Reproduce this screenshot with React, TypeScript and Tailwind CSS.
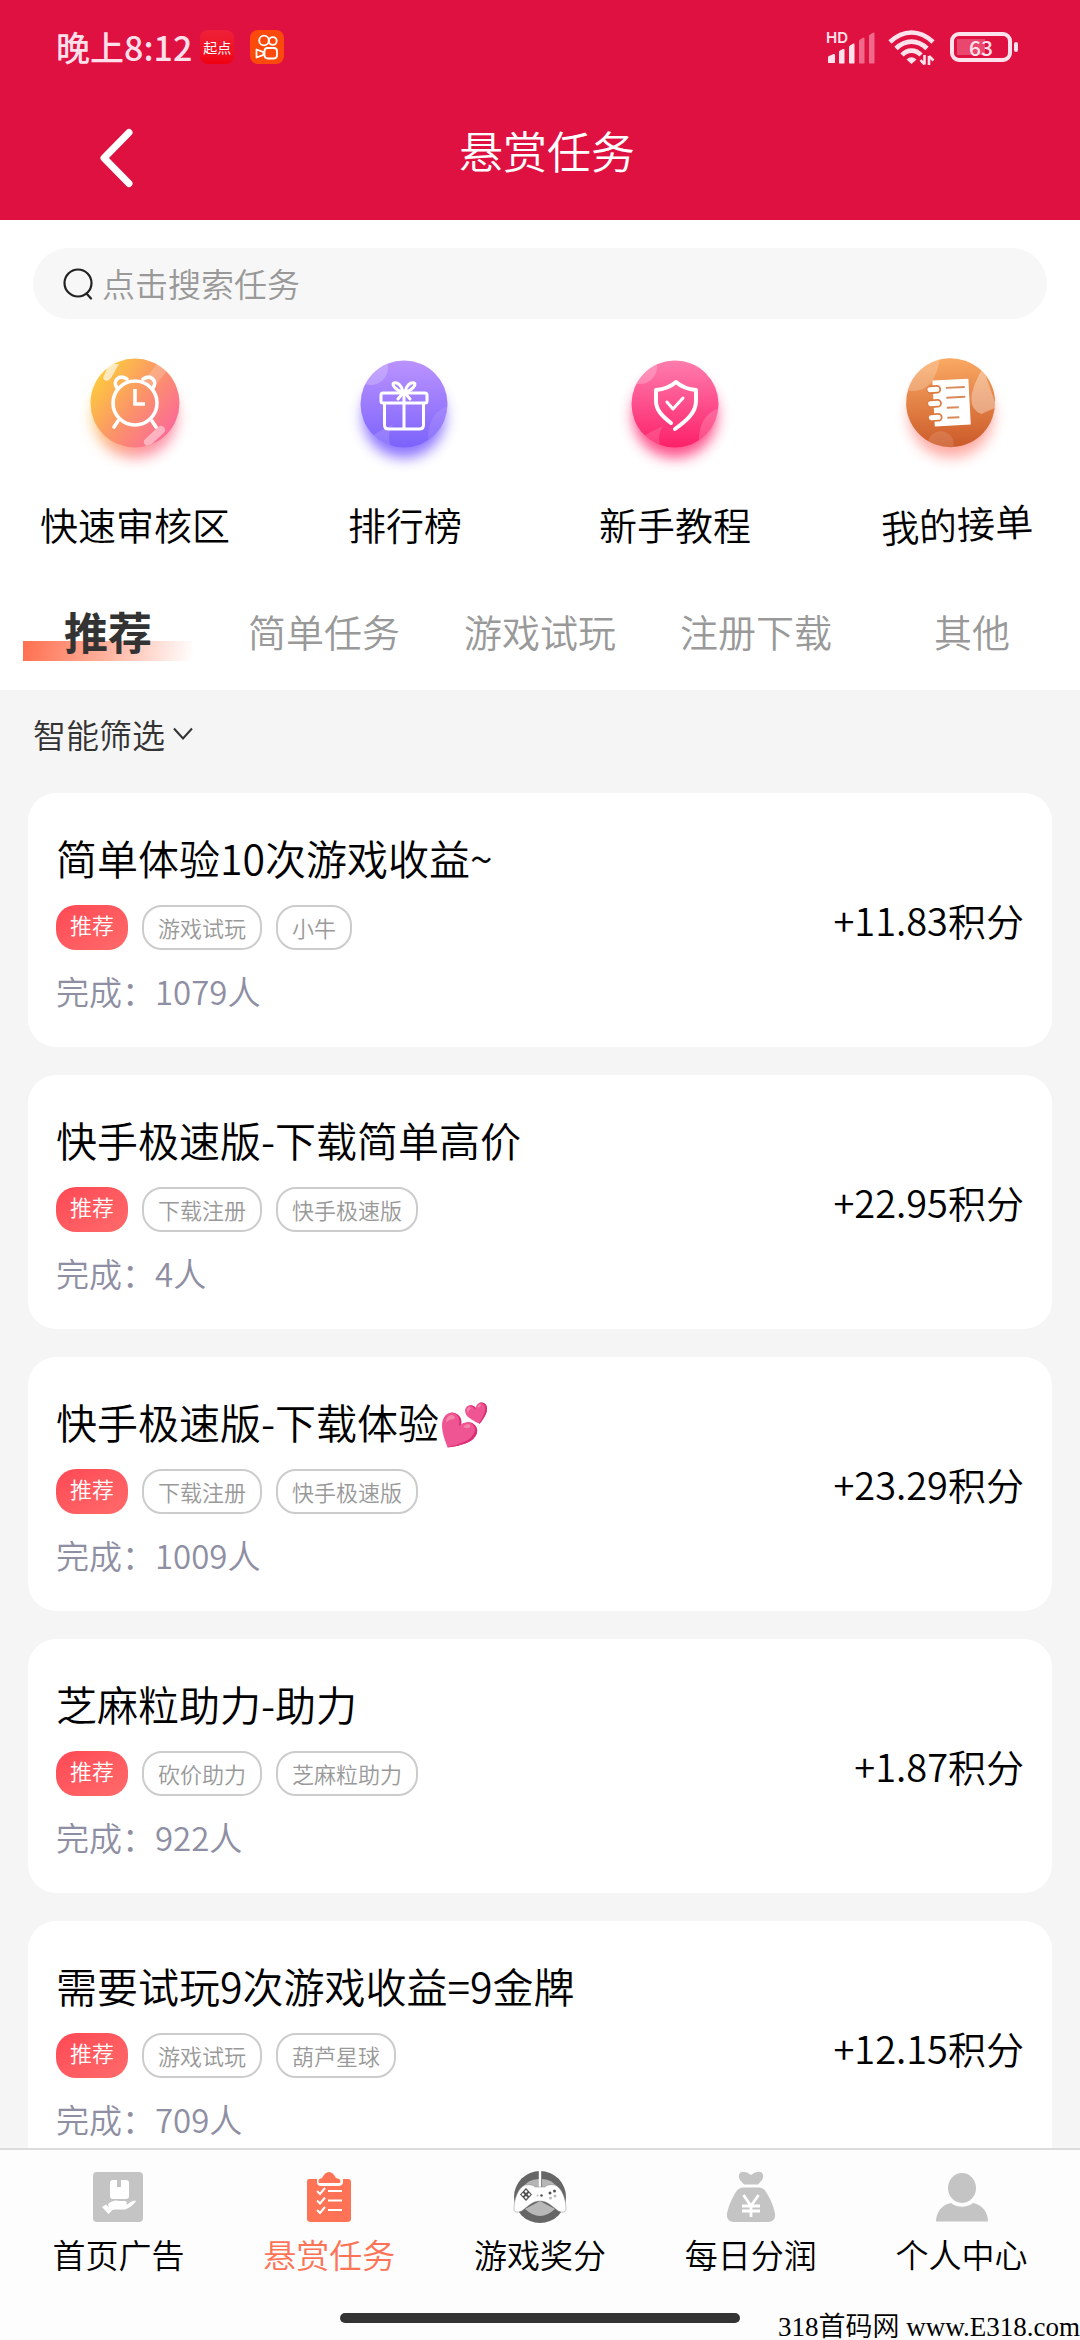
import type { ReactNode } from "react";

type Task = {
  title: string;
  tags: string[];
  done: number;
  points: string;
};

const tasks: Task[] = [
  { title: "简单体验10次游戏收益~", tags: ["游戏试玩", "小牛"], done: 1079, points: "+11.83积分" },
  { title: "快手极速版-下载简单高价", tags: ["下载注册", "快手极速版"], done: 4, points: "+22.95积分" },
  { title: "快手极速版-下载体验💕", tags: ["下载注册", "快手极速版"], done: 1009, points: "+23.29积分" },
  { title: "芝麻粒助力-助力", tags: ["砍价助力", "芝麻粒助力"], done: 922, points: "+1.87积分" },
  { title: "需要试玩9次游戏收益=9金牌", tags: ["游戏试玩", "葫芦星球"], done: 709, points: "+12.15积分" },
];

function KuaishouIcon() {
  return (
    <svg viewBox="0 0 34 34" className="size-[34px]" fill="none" stroke="#fff" strokeWidth="1.8" aria-hidden="true">
      <rect width="34" height="34" rx="8" fill="#fb4a0b" stroke="none" />
      <circle cx="14" cy="10.5" r="4.8" />
      <circle cx="22.8" cy="11" r="3.9" />
      <rect x="14.5" y="18" width="12.5" height="10.5" rx="3.2" />
      <path d="M6.5 19.5v8l7-2.6v-2.8z" strokeLinejoin="round" />
    </svg>
  );
}

function SignalIcon() {
  return (
    <span className="flex flex-col">
      <svg viewBox="0 0 50 34" className="h-[34px] w-[50px] overflow-visible" aria-hidden="true">
        <text x="0" y="13" fontSize="15" fontWeight="600" fill="#ffe3ec" fontFamily="Inter, sans-serif">HD</text>
        <g fill="#ffe3ec">
          <path d="M2 33v-5.5q0-1 1-1.4l4.500-2q1.500-.4 1.500 1v7.500q0 .4-.4.4H2.400q-.4 0-.4-.4z" />
          <path d="M13 33V22q0-1 1-1.400l3-1.500q1.500-.5 1.500 1V33q0 .4-.4.400h-4.700q-.4 0-.4-.4z" />
          <path d="M23 33V17q0-1 1-1.500l3-1.800q1.500-.7 1.500 1V33q0 .4-.4.400h-4.700q-.4 0-.4-.4z" />
        </g>
        <g fill="#f0688a">
          <path d="M33 33V11q0-1 1-1.500l3-1.800q1.500-.7 1.500 1V33q0 .4-.4.400h-4.700q-.4 0-.4-.4z" />
          <path d="M43 33V6q0-1 1-1.500l3-1.800q1.500-.7 1.500 1V33q0 .4-.4.400h-4.700q-.4 0-.4-.4z" />
        </g>
      </svg>
    </span>
  );
}

function WifiIcon() {
  return (
    <svg viewBox="0 0 48 36" className="h-9 w-12" fill="none" stroke="#ffe3ec" strokeWidth="4.6" aria-hidden="true">
      <path d="M2 13Q12 3.500 23.500 3.500T45 13" />
      <path d="M8 19.500Q15 12.600 23.500 12.600T39 19.500" />
      <path d="M14 26Q18 21.600 23.500 21.600T33 26" />
      <path d="M18.500 30.500q5-4.500 10 0L23.500 35z" fill="#ffe3ec" stroke="none" />
      <path d="M36.500 26v9.500M36.500 35.500l-4-4.500M41 36v-9M41 27l4.500 4.500" strokeWidth="2.6" />
    </svg>
  );
}

function Battery() {
  return (
    <div className="flex items-center gap-[2px]">
      <div className="flex h-[30px] w-[62px] items-center rounded-[9px] border-4 border-[#ffe3ec] bg-[linear-gradient(90deg,transparent_3px,#e9476e_3px,#e9476e_31px,transparent_31px)] bg-[length:100%_16px] bg-center bg-no-repeat">
        <span className="flex-1 text-center text-[21px] leading-[22px] font-medium text-[#ffe3ec]">63</span>
      </div>
      <div className="h-[10px] w-1 rounded-sm bg-[#ffe3ec]" />
    </div>
  );
}

function ClockBadge() {
  return (
    <svg viewBox="0 0 120 130" className="h-[130px] w-[120px]" fill="none" aria-hidden="true">
      <defs>
        <linearGradient id="clock" x1="0.1" y1="0.2" x2="0.9" y2="0.8">
          <stop offset="0" stopColor="#fdc840" />
          <stop offset="0.5" stopColor="#fb9468" />
          <stop offset="1" stopColor="#fc6c95" />
        </linearGradient>
        <filter id="clockBlur" x="-30%" y="-30%" width="160%" height="160%">
          <feGaussianBlur stdDeviation="7" />
        </filter>
        <clipPath id="clockClip"><circle cx="60" cy="55" r="44.5" /></clipPath>
      </defs>
      <circle cx="60" cy="68" r="42" fill="url(#clock)" opacity="0.8" filter="url(#clockBlur)" />
      <circle cx="60" cy="55" r="44.5" fill="url(#clock)" />
      <g clipPath="url(#clockClip)">
        <path d="M40 16l-6 0-6 14q3 6 8 0l8-14z" fill="#fff" fillOpacity="0.65" />
        <path d="M88 18L74 36" stroke="#fff" strokeOpacity="0.2" strokeWidth="12" />
        <path d="M86 82L73 94" stroke="#fff" strokeOpacity="0.45" strokeWidth="8" strokeLinecap="round" />
      </g>
      <g stroke="#fff" strokeWidth="3.6" strokeLinecap="round">
        <circle cx="60" cy="55" r="22" />
        <path d="M42 40c-5-7 2-14 10-9M78 40c5-7-2-14-10-9" />
        <path d="M43 73l-4 6M77 73l4 6" />
        <path d="M60 41v15h10" strokeLinecap="butt" />
      </g>
    </svg>
  );
}

function GiftBadge() {
  return (
    <svg viewBox="0 0 120 130" className="h-[130px] w-[120px]" fill="none" aria-hidden="true">
      <defs>
        <linearGradient id="gift" x1="0" y1="0" x2="0" y2="1">
          <stop offset="0" stopColor="#bb93ff" />
          <stop offset="1" stopColor="#7c63fb" />
        </linearGradient>
        <filter id="giftBlur" x="-30%" y="-30%" width="160%" height="160%">
          <feGaussianBlur stdDeviation="7" />
        </filter>
        <clipPath id="giftClip"><circle cx="59" cy="56" r="43.5" /></clipPath>
      </defs>
      <circle cx="59" cy="69" r="41" fill="#8266ff" opacity="0.9" filter="url(#giftBlur)" />
      <circle cx="59" cy="56" r="43.5" fill="url(#gift)" />
      <g clipPath="url(#giftClip)" fill="#fff" fillOpacity="0.2">
        <circle cx="26" cy="20" r="17" />
        <path d="M26 88l22-12q-8 12 0 28z" fillOpacity="0.14" />
        <path d="M104 58q-22 6-21 36l21 6z" fillOpacity="0.1" />
      </g>
      <g stroke="#fff" strokeWidth="3" strokeLinejoin="round" strokeLinecap="round">
        <rect x="36" y="45" width="46" height="10" rx="2" />
        <path d="M39.500 56v21q0 4 4 4h31q4 0 4-4V56M59 46v34" />
        <path d="M58 44c-7-1-12-8-9-9 4-1 8 3 9 9zM60 44c7-1 12-8 9-9-4-1-8 3-9 9zM58 45l-5 6M60 45l5 6" />
      </g>
    </svg>
  );
}

function ShieldBadge() {
  return (
    <svg viewBox="0 0 120 130" className="h-[130px] w-[120px]" fill="none" aria-hidden="true">
      <defs>
        <linearGradient id="shield" x1="0" y1="0" x2="0" y2="1">
          <stop offset="0" stopColor="#ff7cad" />
          <stop offset="1" stopColor="#fc2169" />
        </linearGradient>
        <filter id="shieldBlur" x="-30%" y="-30%" width="160%" height="160%">
          <feGaussianBlur stdDeviation="7" />
        </filter>
        <clipPath id="shieldClip"><circle cx="60" cy="56" r="43.5" /></clipPath>
      </defs>
      <circle cx="60" cy="68" r="42" fill="#ff3f7f" opacity="0.9" filter="url(#shieldBlur)" />
      <circle cx="60" cy="56" r="43.5" fill="url(#shield)" />
      <g clipPath="url(#shieldClip)" fill="#fff" fillOpacity="0.22">
        <circle cx="25" cy="19" r="17" />
        <path d="M28 88l20-10q-8 12 0 26z" fillOpacity="0.14" />
        <path d="M104 60q-22 8-20 38l20 4z" fillOpacity="0.18" />
      </g>
      <g stroke="#fff" strokeWidth="4" strokeLinejoin="round" strokeLinecap="round">
        <path d="M56 75C47 68 41 62 41 53V42q12-1 20-8 8 7 20 8v11c0 12-10 20-21 28" />
        <path d="M52 54l6 7 10-11" strokeWidth="3" />
      </g>
    </svg>
  );
}

function NotebookBadge() {
  return (
    <svg viewBox="0 0 120 130" className="h-[130px] w-[120px]" fill="none" aria-hidden="true">
      <defs>
        <linearGradient id="note" x1="0" y1="0" x2="0" y2="1">
          <stop offset="0" stopColor="#faa963" />
          <stop offset="1" stopColor="#cb5a29" />
        </linearGradient>
        <filter id="noteBlur" x="-30%" y="-30%" width="160%" height="160%">
          <feGaussianBlur stdDeviation="7" />
        </filter>
        <clipPath id="noteClip"><circle cx="60" cy="55" r="44.5" /></clipPath>
      </defs>
      <circle cx="60" cy="68" r="42" fill="#ff7d72" opacity="0.65" filter="url(#noteBlur)" />
      <circle cx="60" cy="55" r="44.5" fill="url(#note)" />
      <g clipPath="url(#noteClip)" fill="#fff" fillOpacity="0.22">
        <path d="M10 38q34 14 42-30L10 8z" />
        <path d="M94 22q-24 36-4 46l16-6z" fillOpacity="0.35" />
        <circle cx="48" cy="96" r="13" fillOpacity="0.12" />
      </g>
      <path d="M43 32h36v46H43z" fill="#fff" />
      <g stroke="#db7a3f" strokeWidth="8.5" strokeLinecap="round">
        <path d="M41 41h6M41 55h6M41 69h6" />
      </g>
      <g stroke="#fff" strokeWidth="5" strokeLinecap="round">
        <path d="M40 41h7M40 55h7M40 69h7" />
      </g>
      <g stroke="#d98a5a" strokeWidth="2">
        <path d="M56 40h19M56 50h19M56 60h12M56 70h12" />
      </g>
    </svg>
  );
}

function HomeAdIcon() {
  return (
    <svg viewBox="0 0 54 54" className="size-[54px]" aria-hidden="true">
      <rect x="2" y="2" width="50" height="50" rx="4" fill="#c4c4c4" />
      <path d="M22 10h4v7h4v-7h5q3 0 3 3v13q0 3-3 3H22q-3 0-3-3V13q0-3 3-3z" fill="#fff" />
      <path d="M17 34q6-5 11-3h6q3 1 1 3.500h-7 8q4-3 7-4 3 0 1 2-4 5-10 7H24q-3 0-5 2z" fill="#fff" />
      <path d="M11 37l4-2.500 6 6-3.500 3.500z" fill="#fff" />
    </svg>
  );
}

function TasksIcon() {
  return (
    <svg viewBox="0 0 54 54" className="size-[54px]" fill="none" aria-hidden="true">
      <path d="M7 9h8v3q0 4 4 4h17q5 0 5-4V9h5q3 0 3 3v37q0 3-4 3H9q-4 0-4-3V12q0-3 2-3z" fill="#fe7355" />
      <path d="M17 13q-2-4 3-5 3-6 7-6t7 6q6 1 4 5z" fill="#fe7355" />
      <g stroke="#fff" strokeWidth="2">
        <path d="M15 21l3 3 5-6M15 30.500l3 3 5-6M15 40l3 3 5-6M26 21h14M26 30.500h14M26 40h14" />
      </g>
    </svg>
  );
}

function GamepadIcon() {
  return (
    <svg viewBox="0 0 54 54" className="size-[54px]" aria-hidden="true">
      <circle cx="27" cy="27" r="26" fill="#666" />
      <path d="M9 19Q14 9 26 9v14zM45 19Q40 9 29 9v14z" fill="#b5b5b5" />
      <path d="M25.800 0h2.400v18h-2.400z" fill="#fdfdfd" />
      <path d="M12 39q15 14 30 0L27 31z" fill="#b8b8b8" />
      <path d="M12 15q8-1 10 2h10q2-3 10-2c7 3 11 14 11 24 0 4-5 4-9 1-5-4-10-9-17-9s-12 5-17 9c-4 3-9 3-9-1 0-10 4-21 11-24z" fill="#fff" stroke="#888" strokeWidth="0.5" />
      <path d="M13 18l6 6.500-6 6.500-6-6.500z" fill="#505050" />
      <g fill="#fff">
        <circle cx="13" cy="21.5" r="1.3" />
        <circle cx="13" cy="27.5" r="1.3" />
        <circle cx="10" cy="24.5" r="1.3" />
        <circle cx="16" cy="24.5" r="1.3" />
      </g>
      <g fill="#555">
        <circle cx="37" cy="23" r="1.5" />
        <circle cx="41.5" cy="21" r="1.5" />
        <circle cx="28.5" cy="25.5" r="1.3" />
      </g>
      <g fill="#bbb">
        <circle cx="24.5" cy="25.5" r="1" />
        <circle cx="37.5" cy="28" r="1.5" />
        <circle cx="42" cy="26" r="1.5" />
      </g>
    </svg>
  );
}

function MoneyBagIcon() {
  return (
    <svg viewBox="0 0 54 54" className="size-[54px]" aria-hidden="true">
      <path d="M17 2q5-1 10 3 5-4 10-3 4 3 1 8l-4 4.500H20L16 10q-3-5 1-8z" fill="#c4c4c4" />
      <path d="M19 17.500h16q5 0 8 6 6 10 8 20 1 8-7 8.500H10q-8-.5-7-8.500 2-10 8-20 3-6 8-6z" fill="#c4c4c4" />
      <path d="M19.500 25l7.500 11 7.500-11M18 36h18M18 41h18M27 36v11" fill="none" stroke="#fff" strokeWidth="2.8" />
    </svg>
  );
}

function ProfileIcon() {
  return (
    <svg viewBox="0 0 54 54" className="size-[54px]" aria-hidden="true">
      <ellipse cx="27" cy="18" rx="14" ry="15" fill="#c4c4c4" />
      <path d="M1 51.500c0-8 5-17 15-18.500 6 5 16 5 22 0 10 1.500 15 10.500 15 18.500z" fill="#c4c4c4" />
    </svg>
  );
}

const shortcuts: { label: string; icon: ReactNode; tilt: string }[] = [
  { label: "快速审核区", icon: <ClockBadge />, tilt: "" },
  { label: "排行榜", icon: <GiftBadge />, tilt: "" },
  { label: "新手教程", icon: <ShieldBadge />, tilt: "" },
  { label: "我的接单", icon: <NotebookBadge />, tilt: "pl-4 rotate-[-3deg]" },
];

const tabs = ["推荐", "简单任务", "游戏试玩", "注册下载", "其他"];

const navItems: { label: string; icon: ReactNode }[] = [
  { label: "首页广告", icon: <HomeAdIcon /> },
  { label: "悬赏任务", icon: <TasksIcon /> },
  { label: "游戏奖分", icon: <GamepadIcon /> },
  { label: "每日分润", icon: <MoneyBagIcon /> },
  { label: "个人中心", icon: <ProfileIcon /> },
];

function TaskCard({ task }: { task: Task }) {
  return (
    <li className="flex items-center justify-between rounded-[28px] bg-white px-7 pt-[38px] pb-[35px]">
      <div className="flex flex-col">
        <h2 className="text-[41px] leading-[52px] text-black">{task.title}</h2>
        <div className="mt-[22px] flex gap-[14px] text-[22px]">
          <span className="h-[45px] rounded-[20px] bg-gradient-to-br from-[#ff4855] to-[#ff6a6b] px-[14px] leading-[38px] text-white">
            推荐
          </span>
          {task.tags.map((tag) => (
            <span key={tag} className="h-[45px] rounded-[20px] border-2 border-[#ccc] px-[14px] leading-[41px] text-[#999]">
              {tag}
            </span>
          ))}
        </div>
        <p className="mt-5 text-[33px] leading-[42px] text-[#8f8fa3]">完成：{task.done}人</p>
      </div>
      <p className="pb-1 text-[38px] leading-[50px] text-black">{task.points}</p>
    </li>
  );
}

export default function App() {
  return (
    <div className="flex h-screen flex-col overflow-hidden bg-[#f5f5f5] [font-family:'Noto_Sans_CJK_SC',sans-serif] [font-weight:350]">
      <header className="shrink-0 bg-[#df1140] text-white">
        <div className="flex h-24 items-center justify-between pr-[62px] pb-[2px] pl-14">
          <div className="flex items-center">
            <span className="text-[34px] leading-10 font-medium text-[#ffdfe9]">晚上8:12</span>
            <span className="ml-2 flex size-[34px] items-center justify-center rounded-lg bg-gradient-to-b from-[#ee2038] to-[#f0000f] text-[14px] leading-6 font-normal">
              起点
            </span>
            <span className="ml-4">
              <KuaishouIcon />
            </span>
          </div>
          <div className="flex items-center">
            <SignalIcon />
            <span className="ml-3">
              <WifiIcon />
            </span>
            <span className="ml-[14px]">
              <Battery />
            </span>
          </div>
        </div>
        <div className="grid h-[124px] grid-cols-[1fr_auto_1fr] items-center">
          <button type="button" aria-label="返回" className="ml-[92px] w-12">
            <svg viewBox="0 0 48 68" className="h-[68px] w-12" fill="none" stroke="#fff" strokeWidth="7" strokeLinecap="round" strokeLinejoin="round" aria-hidden="true">
              <path d="M37 8.500L12 34l25 25.500" />
            </svg>
          </button>
          <h1 className="pb-4 pl-[14px] text-[44px] leading-[60px]">悬赏任务</h1>
        </div>
      </header>

      <section className="shrink-0 bg-white pt-7">
        <label className="mx-[33px] flex h-[71px] items-center rounded-full bg-[#f7f7f7] pl-[29px]">
          <svg viewBox="0 0 34 34" className="size-[34px]" fill="none" stroke="#222" strokeWidth="2.2" strokeLinecap="round" aria-hidden="true">
            <circle cx="16" cy="16" r="13.5" />
            <path d="M24.500 26.500l4.500 5" />
          </svg>
          <input
            type="text"
            aria-label="搜索任务"
            placeholder="点击搜索任务"
            className="ml-[6px] h-12 flex-1 bg-transparent text-[33px] outline-none placeholder:text-[#999] placeholder:opacity-100"
          />
        </label>

        <nav className="mt-[29px] grid grid-cols-4" aria-label="快捷入口">
          {shortcuts.map((s) => (
            <a key={s.label} href="#" className={"flex flex-col items-center text-[38px] leading-[52px] text-black " + s.tilt}>
              {s.icon}
              <span className="mt-5">{s.label}</span>
            </a>
          ))}
        </nav>

        <div role="tablist" className="mt-7 grid h-28 grid-cols-5 items-center pb-[6px]">
          {tabs.map((t, i) =>
            i === 0 ? (
              <button key={t} type="button" role="tab" aria-selected="true" className="relative mx-[23px] h-[60px] text-[44px] leading-[60px] font-bold text-[#333]">
                <span className="absolute inset-x-0 bottom-0 h-5 bg-[linear-gradient(100deg,#ff6f4f,#ffb3a0_50%,#fff)]" />
                <span className="relative">{t}</span>
              </button>
            ) : (
              <button key={t} type="button" role="tab" aria-selected="false" className="h-[60px] text-[38px] leading-[60px] text-[#999]">
                {t}
              </button>
            ),
          )}
        </div>
      </section>

      <main className="min-h-0 flex-1 overflow-hidden">
        <button type="button" className="ml-[33px] flex h-[103px] items-center pb-4 text-[33px] leading-[44px] text-[#333]">
          智能筛选
          <svg viewBox="0 0 20 14" className="ml-2 h-[14px] w-5" fill="none" stroke="#333" strokeWidth="2" aria-hidden="true">
            <path d="M1 1.500l9 10 9-10" />
          </svg>
        </button>
        <ul className="mx-7 flex flex-col gap-7">
          {tasks.map((t) => (
            <TaskCard key={t.title} task={t} />
          ))}
        </ul>
      </main>

      <footer className="shrink-0 border-t-2 border-[#dcdcdc] bg-[#fdfdfd]">
        <nav className="grid grid-cols-5 px-[13px] pt-5" aria-label="主导航">
          {navItems.map((n, i) => (
            <a
              key={n.label}
              href="#"
              className={"flex flex-col items-center text-[33px] leading-[44px] " + (i === 1 ? "text-[#fe7355]" : "text-black")}
            >
              {n.icon}
              <span className="mt-2">{n.label}</span>
            </a>
          ))}
        </nav>
        <div className="grid h-[64px] grid-cols-[1fr_400px_1fr] items-end">
          <span className="col-start-2 mb-[17px] h-[10px] rounded-full bg-[#333]" />
          <span className="text-right text-[27px] leading-[26px] whitespace-nowrap text-black [font-family:'Liberation_Serif','Noto_Sans_CJK_SC',serif]">
            318首码网 www.E318.com
          </span>
        </div>
      </footer>
    </div>
  );
}
